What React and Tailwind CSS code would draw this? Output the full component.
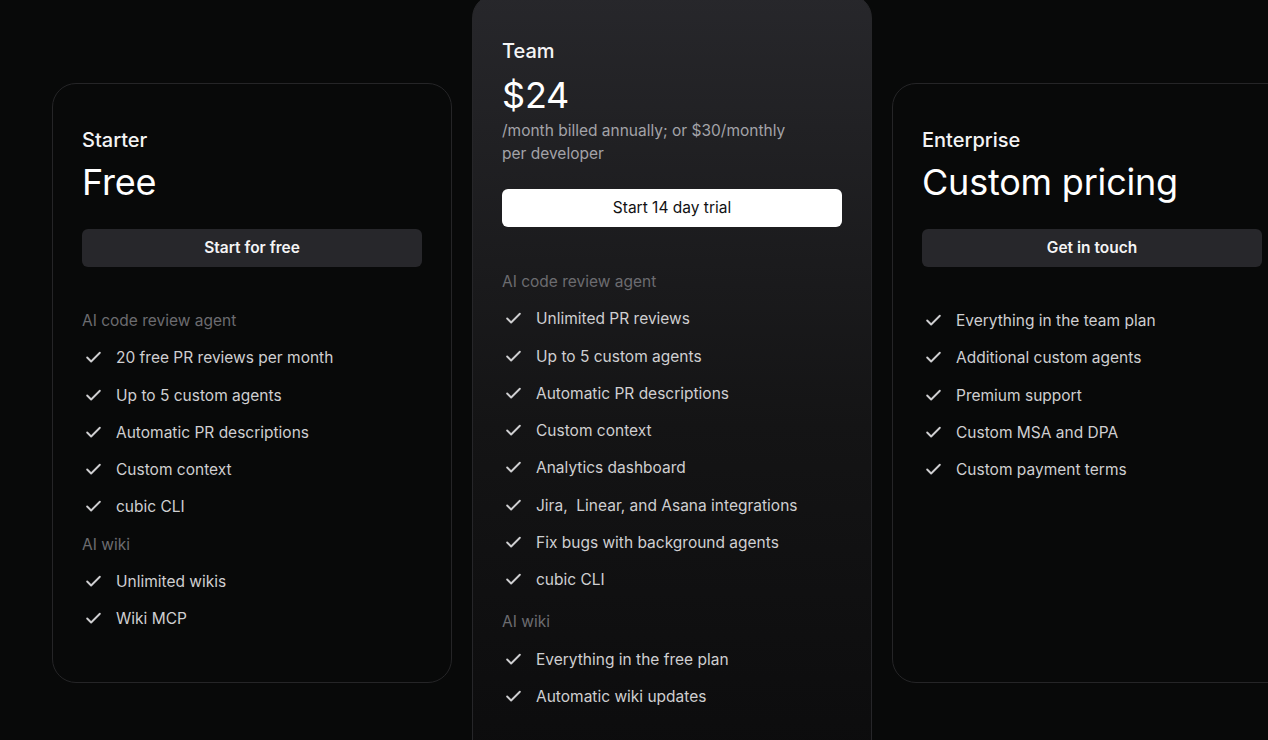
import React from "react";
import { Check } from "lucide-react";

const plans = [
  {
    name: "Starter",
    price: "Free",
    button: "Start for free",
    groups: [
      {
        label: "AI code review agent",
        items: [
          "20 free PR reviews per month",
          "Up to 5 custom agents",
          "Automatic PR descriptions",
          "Custom context",
          "cubic CLI",
        ],
      },
      { label: "AI wiki", items: ["Unlimited wikis", "Wiki MCP"] },
    ],
  },
  {
    name: "Team",
    price: "$24",
    featured: true,
    note: "/month billed annually; or $30/monthly per developer",
    button: "Start 14 day trial",
    groups: [
      {
        label: "AI code review agent",
        items: [
          "Unlimited PR reviews",
          "Up to 5 custom agents",
          "Automatic PR descriptions",
          "Custom context",
          "Analytics dashboard",
          "Jira,  Linear, and Asana integrations",
          "Fix bugs with background agents",
          "cubic CLI",
        ],
      },
      {
        label: "AI wiki",
        items: ["Everything in the free plan", "Automatic wiki updates"],
      },
    ],
  },
  {
    name: "Enterprise",
    price: "Custom pricing",
    button: "Get in touch",
    groups: [
      {
        items: [
          "Everything in the team plan",
          "Additional custom agents",
          "Premium support",
          "Custom MSA and DPA",
          "Custom payment terms",
        ],
      },
    ],
  },
];

const Feature = ({ text }) => (
  <li className="h-[37.25px] flex items-center gap-[13px] pl-[2px] text-[15.5px] text-[#cfcfd1]">
    <Check className="w-[19px] h-[19px] text-[#cfcfd1]" strokeWidth={2.4} />
    <span className="whitespace-pre">{text}</span>
  </li>
);

const PlanCard = ({ plan }) => {
  const featured = plan.featured;
  return (
    <div
      className={`shrink-0 w-[400px] rounded-[24px] border px-[29px] pt-[42px] ${
        featured
          ? "-mt-[89px] h-[860px] border-[#262629] bg-gradient-to-b from-[#27272b] via-[#141415] to-[#0a0a0b]"
          : "h-[600px] border-[#252527] bg-[#080909]"
      }`}
    >
      <h3 className="text-[20px] leading-7 font-medium text-[#f4f4f5]">
        {plan.name}
      </h3>
      <p
        className={`text-[36px] leading-10 tracking-[-0.2px] text-white ${
          featured ? "mt-[10px]" : "mt-2"
        }`}
      >
        {plan.price}
      </p>
      {plan.note && (
        <p className="mt-1 w-[300px] text-[15.5px] leading-[23px] text-[#a3a3a8]">
          {plan.note}
        </p>
      )}
      <button
        className={`block w-full h-[38px] rounded-[6px] text-[15.5px] ${
          featured
            ? "mt-6 bg-white text-[#111113]"
            : "mt-[27px] bg-[#27272b] text-[#f4f4f5] font-semibold"
        }`}
      >
        {plan.button}
      </button>
      <div className={featured ? "mt-[36px]" : "mt-[35px]"}>
        {plan.groups.map((g, gi) => (
          <div key={gi} className={gi > 0 && featured ? "mt-[5px]" : ""}>
            {g.label && (
              <p className="h-[37.25px] flex items-center text-[15.5px] text-[#6c6c70]">
                {g.label}
              </p>
            )}
            <ul>
              {g.items.map((it) => (
                <Feature key={it} text={it} />
              ))}
            </ul>
          </div>
        ))}
      </div>
    </div>
  );
};

export default function App() {
  return (
    <div
      className="w-full h-[740px] overflow-hidden bg-[#080909]"
      style={{ fontFamily: "Inter, 'Noto Sans', sans-serif" }}
    >
      <div className="flex items-start gap-5 pl-[52px] pt-[83px]">
        {plans.map((p) => (
          <PlanCard key={p.name} plan={p} />
        ))}
      </div>
    </div>
  );
}
